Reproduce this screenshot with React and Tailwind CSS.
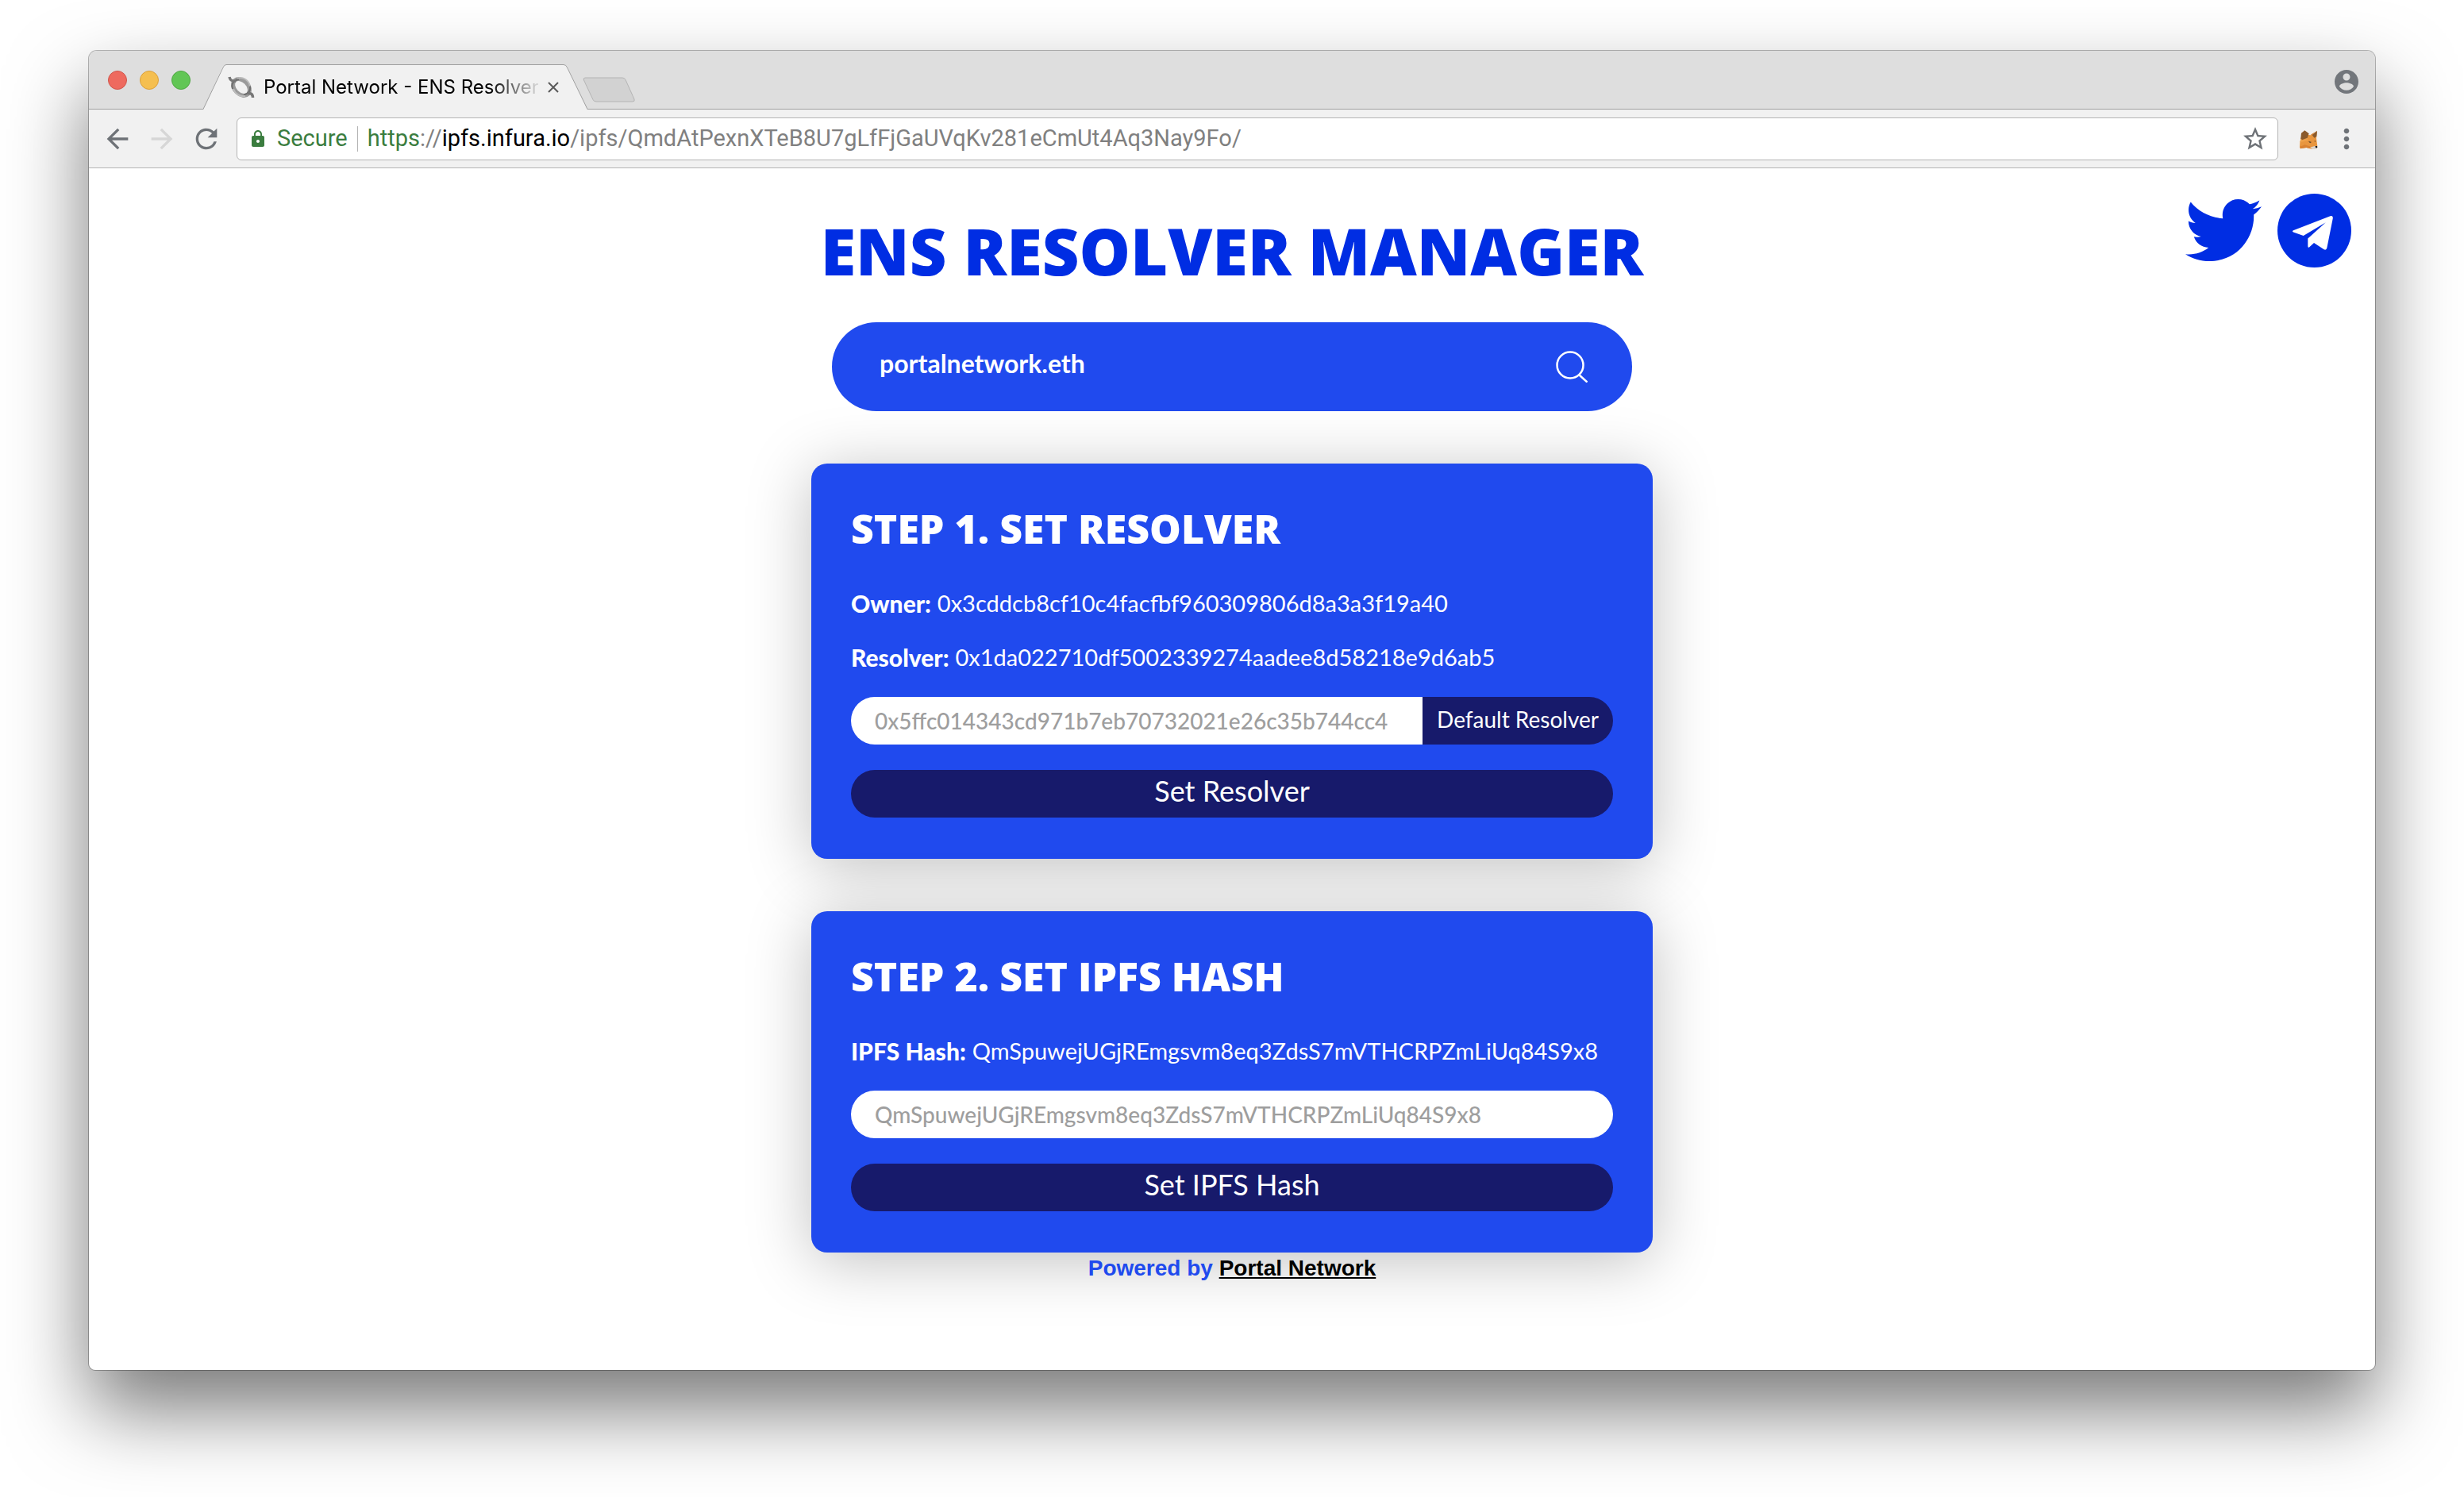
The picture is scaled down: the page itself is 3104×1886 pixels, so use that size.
import { FaTwitter } from "react-icons/fa";
import { MdArrowBack, MdArrowForward, MdRefresh, MdLock, MdStarBorder, MdMoreVert } from "react-icons/md";

function KnotIcon() {
  return (
    <svg viewBox="0 0 40 40" className="size-10 shrink-0" fill="none" aria-hidden="true">
      <ellipse cx="20" cy="20" rx="12" ry="8.500" transform="rotate(45 20 20)" stroke="#9a9a9a" strokeWidth="5" />
      <path d="M9 22c-2-6 1-11 8-12M31 18c1 6-1 10-8 11.500" stroke="#6e6e6e" strokeWidth="2" />
      <path d="M5 7c1 5 4 5.500 8 5M34.500 33c0-5-3-6-7-5.500" stroke="#777" strokeWidth="3.500" />
      <path d="M15 8.500c7-2 14 2 16 10M25 31c-7 1-13-3-15-9" stroke="#bbb" strokeWidth="2" />
    </svg>
  );
}

function AccountIcon() {
  return (
    <svg viewBox="0 0 24 24" className="size-9" fill="currentColor" aria-hidden="true">
      <path d="M12 2C6.480 2 2 6.480 2 12s4.480 10 10 10 10-4.480 10-10S17.520 2 12 2zm0 3c1.660 0 3 1.340 3 3s-1.340 3-3 3-3-1.340-3-3 1.340-3 3-3zm0 14.200c-2.500 0-4.710-1.280-6-3.220.030-1.990 4-3.080 6-3.080 1.990 0 5.970 1.090 6 3.080-1.290 1.940-3.500 3.220-6 3.220z" />
    </svg>
  );
}

function FoxIcon() {
  return (
    <svg viewBox="0 0 108 108" className="size-9" aria-hidden="true">
      <path d="M28 44 45 38 62 40 74 34 86 28 84 52 88 82 84 89 66 92 46 87 24 91 21 84 22 66Z" fill="#e8963f" />
      <path d="M24 91 21 84 40 76 66 84 60 90 46 87Z" fill="#d98232" />
      <path d="M45 38 54 60 28 66 22 66 28 44Z" fill="#eda04a" />
      <path d="M40 22 56 34 50 50 30 58 25 52 27 32Z" fill="#8a5a2c" />
      <path d="M87 23 85 45 76 50 68 39Z" fill="#8a5a2c" />
      <path d="M87 23 68 39 62 38Z" fill="#d98232" />
      <path d="M54 62l11 3-2 5-5-2zM76 62l6-1-3 5z" fill="#6b4a2a" />
      <path d="M60 86 80 80 86 88 80 93 70 93Z" fill="#ded5cb" />
      <path d="M80 81l7 0 1 5-4 3-4-4z" fill="#1c1c1c" />
    </svg>
  );
}

function TelegramIcon() {
  return (
    <svg viewBox="0 0 93 93" className="size-[93px]" aria-hidden="true">
      <circle cx="46.500" cy="46.500" r="46.500" fill="#002de3" />
      <path
        d="M20 46.200 66.500 28.200Q70 27.300 69.800 31L62.300 68.600Q61.500 71.600 58.600 70.300L46 61.900 40.300 67.300Q38.300 68.800 38.300 66V56.600L60.800 36.200 32.700 53 20 48.600Q18 47.300 20 46.200Z"
        fill="#fff"
      />
    </svg>
  );
}

function TabStrip() {
  return (
    <div className="flex h-[74px] items-end border-b border-[#9f9f9f] bg-[#dedede] pl-6 pr-[18px]">
      <div className="flex gap-4 self-center">
        <button aria-label="Close window" className="size-6 rounded-full border border-[#d0564c] bg-[#ee6a5f]" />
        <button aria-label="Minimize window" className="size-6 rounded-full border border-[#dba03b] bg-[#f5bf50]" />
        <button aria-label="Zoom window" className="size-6 rounded-full border border-[#50a743] bg-[#62c655]" />
      </div>
      <div className="relative -mb-px ml-4 flex h-[57px] w-[484px] items-center pl-7">
        <svg viewBox="0 0 484 57" className="absolute inset-0 size-full" aria-hidden="true">
          <path d="M0 57 24 4Q26 .500 29 .500H454Q457 .500 459 4L484 57Z" fill="#f1f1f1" />
          <path d="M0 56.500 25 4Q26.500 .500 29 .500H454Q457 .500 458.500 4L484 56.500" fill="none" stroke="#9f9f9f" />
        </svg>
        <div className="relative flex flex-1 items-center">
          <KnotIcon />
          <span className="ml-2 w-[346px] overflow-hidden whitespace-nowrap font-[Inter,sans-serif] text-2xl text-black [mask-image:linear-gradient(to_right,#000_82%,transparent_102%)]">
            Portal Network - ENS Resolver
          </span>
          <button aria-label="Close tab" className="ml-3">
            <svg viewBox="0 0 14 14" className="size-3.5" aria-hidden="true">
              <path d="M1 1l12 12M13 1 1 13" stroke="#5a5a5a" strokeWidth="2" />
            </svg>
          </button>
        </div>
      </div>
      <button aria-label="New tab" className="-ml-1.5 mb-2">
        <svg viewBox="0 0 66 32" className="h-8 w-[66px]" aria-hidden="true">
          <path d="M3 1H50Q53 1 54 3.500L65 28Q66 31 63 31H17Q14 31 13 28.500L1.500 4Q.500 1 3 1Z" fill="#d2d2d2" stroke="#b4b4b4" />
        </svg>
      </button>
      <button aria-label="Profile" className="mb-4 ml-auto text-[#72767b]">
        <AccountIcon />
      </button>
    </div>
  );
}

function Toolbar() {
  return (
    <div className="flex h-[74px] items-center border-b border-[#b4b4b4] bg-[#f1f1f1] pl-4 pr-4 text-[#6e7277]">
      <div className="flex gap-4">
        <button aria-label="Back"><MdArrowBack className="size-10" /></button>
        <button aria-label="Forward" className="text-[#d6d6d6]"><MdArrowForward className="size-10" /></button>
        <button aria-label="Reload"><MdRefresh className="size-10" /></button>
      </div>
      <div className="ml-[18px] flex h-[54px] min-w-0 flex-1 items-center rounded-md border border-[#b4b4b4] bg-white pl-3.5 pr-2.5 font-[Roboto,sans-serif] text-[29px]">
        <MdLock className="size-6 shrink-0 text-[#3b7d3f]" />
        <span className="ml-3 text-[#3b7d3f]">Secure</span>
        <span className="ml-3 h-8 w-px bg-[#b4b4b4]" />
        <span className="ml-3 flex-1 truncate text-[#808080]">
          <span className="text-[#3b7d3f]">https</span>://<span className="text-black">ipfs.infura.io</span>/ipfs/QmdAtPexnXTeB8U7gLfFjGaUVqKv281eCmUt4Aq3Nay9Fo/
        </span>
        <button aria-label="Bookmark this page"><MdStarBorder className="size-9" /></button>
      </div>
      <button aria-label="Wallet extension" className="ml-5"><FoxIcon /></button>
      <button aria-label="Menu" className="ml-2.5"><MdMoreVert className="size-10" /></button>
    </div>
  );
}

function Card({ title, children }) {
  return (
    <section className="rounded-[20px] bg-[#204aee] px-[50px] py-[52px] text-white shadow-[0_10px_80px_rgba(0,0,0,0.25)]">
      <h2 className="mb-[46px] font-['Open_Sans',sans-serif] text-[50px] font-extrabold leading-[60px]">{title}</h2>
      <div className="flex flex-col gap-8">{children}</div>
    </section>
  );
}

function Field({ label, value }) {
  return (
    <p className="flex h-9 items-center gap-2 whitespace-nowrap text-[29px] leading-9">
      <strong className="text-[30px] font-black">{label}</strong>
      <span>{value}</span>
    </p>
  );
}

function ActionButton({ children }) {
  return (
    <button className="h-[60px] rounded-full bg-[#171a6b] pb-2 text-[36px] leading-none text-white">{children}</button>
  );
}

export default function App() {
  return (
    <div className="flex min-h-screen flex-col bg-white px-28 pb-40 pt-16">
      <div className="flex flex-1 flex-col overflow-hidden rounded-b-lg rounded-t-[10px] bg-white shadow-[0_0_0_1px_rgba(0,0,0,0.28),0_50px_100px_rgba(0,0,0,0.53)]">
        <TabStrip />
        <Toolbar />
        <main className="flex-1 font-[Lato,sans-serif]">
          <header className="grid grid-cols-[1fr_auto_1fr] items-start">
            <h1 className="col-start-2 pt-[54px] font-['Open_Sans',sans-serif] text-[81px] font-extrabold leading-[100px] text-[#002de3]">ENS RESOLVER MANAGER</h1>
            <nav className="flex items-center gap-5 justify-self-end pr-[30px] pt-[30px]">
              <a href="#twitter" aria-label="Twitter"><FaTwitter className="size-24 text-[#002de3]" /></a>
              <a href="#telegram" aria-label="Telegram"><TelegramIcon /></a>
            </nav>
          </header>
          <div className="mx-auto flex max-w-[1060px] flex-col gap-[66px] pt-10">
            <form className="relative z-10 mx-[26px] flex h-28 items-center rounded-full bg-[#204aee] pl-[60px] pr-14">
              <input
                aria-label="ENS name"
                defaultValue="portalnetwork.eth"
                className="min-w-0 flex-1 bg-transparent pb-2 text-[32px] font-bold text-white outline-none"
              />
              <button type="button" aria-label="Search">
                <svg viewBox="0 0 40 40" className="size-10" fill="none" stroke="#fff" strokeWidth="2.500" aria-hidden="true">
                  <circle cx="18" cy="18" r="16.500" />
                  <path d="M29 30 39.500 39.500" />
                </svg>
              </button>
            </form>
            <Card title="STEP 1. SET RESOLVER">
              <Field label="Owner:" value="0x3cddcb8cf10c4facfbf960309806d8a3a3f19a40" />
              <Field label="Resolver:" value="0x1da022710df5002339274aadee8d58218e9d6ab5" />
              <div className="flex h-[60px] overflow-hidden rounded-full">
                <input
                  aria-label="Resolver address"
                  placeholder="0x5ffc014343cd971b7eb70732021e26c35b744cc4"
                  className="min-w-0 flex-1 bg-white px-[30px] text-[28px] font-medium text-black outline-none placeholder:text-[#9e9e9e]"
                />
                <button className="w-60 bg-[#171a6b] pb-1 text-[28px] text-white">Default Resolver</button>
              </div>
              <ActionButton>Set Resolver</ActionButton>
            </Card>
            <Card title="STEP 2. SET IPFS HASH">
              <Field label="IPFS Hash:" value="QmSpuwejUGjREmgsvm8eq3ZdsS7mVTHCRPZmLiUq84S9x8" />
              <input
                aria-label="IPFS hash"
                placeholder="QmSpuwejUGjREmgsvm8eq3ZdsS7mVTHCRPZmLiUq84S9x8"
                className="h-[60px] rounded-full bg-white px-[30px] text-[28px] font-medium text-black outline-none placeholder:text-[#9e9e9e]"
              />
              <ActionButton>Set IPFS Hash</ActionButton>
            </Card>
          </div>
          <footer className="relative text-center font-['Liberation_Sans',sans-serif] text-[28px] font-bold leading-10 text-[#204aee]">
            Powered by <a href="#portal-network" className="text-black underline">Portal Network</a>
          </footer>
        </main>
      </div>
    </div>
  );
}
